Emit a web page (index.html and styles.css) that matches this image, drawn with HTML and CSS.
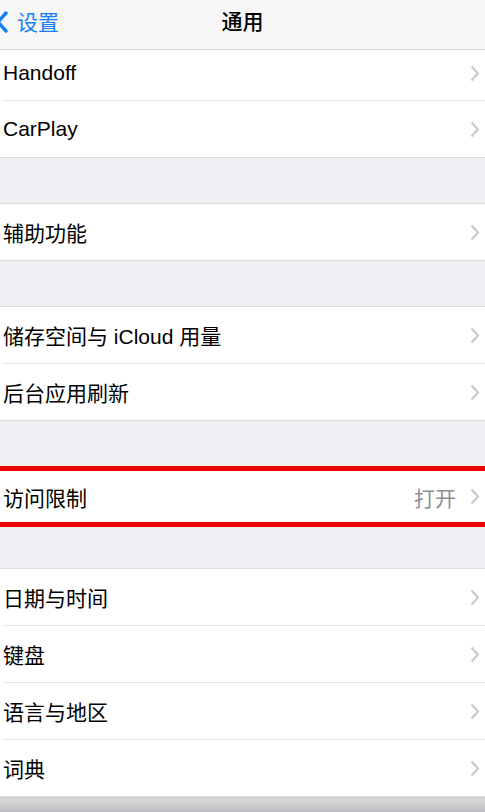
FILE: index.html
```html
<!DOCTYPE html>
<html lang="zh-CN">
<head>
    <meta charset="UTF-8">
    <meta name="viewport" content="width=device-width, initial-scale=1.0">
    <title>通用</title>
    <link rel="stylesheet" href="styles.css">
</head>
<body>
    <div class="nav">
        <div class="back">
            <svg class="back-icon" width="12" height="22" viewBox="0 0 12 22">
                <path d="M10 2 L2 11 L10 20" fill="none" stroke="#157efb" stroke-width="3.4" stroke-linecap="round" stroke-linejoin="round"/>
            </svg>
            <span>设置</span>
        </div>
        <div class="nav-title">通用</div>
    </div>

    <div class="group first">
        <div class="row short"><div class="row-inner"><span class="label">Handoff</span><svg class="chev" width="10" height="17" viewBox="0 0 10 17"><path d="M1.5 1.5 L8 8.5 L1.5 15.5" fill="none" stroke="#c7c7cc" stroke-width="2"/></svg></div></div>
        <div class="row"><div class="row-inner last"><span class="label">CarPlay</span><svg class="chev" width="10" height="17" viewBox="0 0 10 17"><path d="M1.5 1.5 L8 8.5 L1.5 15.5" fill="none" stroke="#c7c7cc" stroke-width="2"/></svg></div></div>
    </div>

    <div class="group">
        <div class="row"><div class="row-inner last"><span class="label">辅助功能</span><svg class="chev" width="10" height="17" viewBox="0 0 10 17"><path d="M1.5 1.5 L8 8.5 L1.5 15.5" fill="none" stroke="#c7c7cc" stroke-width="2"/></svg></div></div>
    </div>

    <div class="group">
        <div class="row"><div class="row-inner"><span class="label">储存空间与 iCloud 用量</span><svg class="chev" width="10" height="17" viewBox="0 0 10 17"><path d="M1.5 1.5 L8 8.5 L1.5 15.5" fill="none" stroke="#c7c7cc" stroke-width="2"/></svg></div></div>
        <div class="row"><div class="row-inner last"><span class="label">后台应用刷新</span><svg class="chev" width="10" height="17" viewBox="0 0 10 17"><path d="M1.5 1.5 L8 8.5 L1.5 15.5" fill="none" stroke="#c7c7cc" stroke-width="2"/></svg></div></div>
    </div>

    <div class="group marked">
        <div class="row"><div class="row-inner last"><span class="label">访问限制</span><span class="value">打开</span><svg class="chev" width="10" height="17" viewBox="0 0 10 17"><path d="M1.5 1.5 L8 8.5 L1.5 15.5" fill="none" stroke="#c7c7cc" stroke-width="2"/></svg></div></div>
    </div>

    <div class="group">
        <div class="row"><div class="row-inner"><span class="label">日期与时间</span><svg class="chev" width="10" height="17" viewBox="0 0 10 17"><path d="M1.5 1.5 L8 8.5 L1.5 15.5" fill="none" stroke="#c7c7cc" stroke-width="2"/></svg></div></div>
        <div class="row"><div class="row-inner"><span class="label">键盘</span><svg class="chev" width="10" height="17" viewBox="0 0 10 17"><path d="M1.5 1.5 L8 8.5 L1.5 15.5" fill="none" stroke="#c7c7cc" stroke-width="2"/></svg></div></div>
        <div class="row"><div class="row-inner"><span class="label">语言与地区</span><svg class="chev" width="10" height="17" viewBox="0 0 10 17"><path d="M1.5 1.5 L8 8.5 L1.5 15.5" fill="none" stroke="#c7c7cc" stroke-width="2"/></svg></div></div>
        <div class="row"><div class="row-inner last"><span class="label">词典</span><svg class="chev" width="10" height="17" viewBox="0 0 10 17"><path d="M1.5 1.5 L8 8.5 L1.5 15.5" fill="none" stroke="#c7c7cc" stroke-width="2"/></svg></div></div>
    </div>

    <div class="bottom-bar"></div>
</body>
</html>
```

FILE: styles.css
```css
html, body {
    margin: 0;
    padding: 0;
}
body {
    width: 485px;
    height: 812px;
    overflow: hidden;
    background-color: #efeff4;
    font-family: "Liberation Sans", "Noto Sans CJK SC", sans-serif;
    font-size: 21px;
    color: #000;
    display: flex;
    flex-direction: column;
}
.nav {
    height: 49px;
    flex-shrink: 0;
    background-color: #f7f7f7;
    border-bottom: 1px solid #d6d6d9;
    display: flex;
    align-items: center;
    justify-content: center;
    position: relative;
}
.back {
    position: absolute;
    left: -4px;
    top: 0;
    height: 42px;
    display: flex;
    align-items: center;
    gap: 9px;
    color: #157efb;
    font-family: "Noto Sans CJK SC", sans-serif;
}
.back-icon {
    margin-top: 1px;
}
.nav-title {
    font-family: "Noto Sans CJK SC", sans-serif;
    font-weight: 500;
    margin-top: -9px;
}
.group {
    background-color: #fff;
    border-top: 1px solid #dcdce0;
    border-bottom: 1px solid #dcdce0;
    margin-top: 45px;
    flex-shrink: 0;
}
.group.first {
    margin-top: 0;
    border-top: none;
}
.group.marked {
    border-top: 5px solid #ee0000;
    border-bottom: 5px solid #ee0000;
    margin-top: 45px;
}
.group.marked + .group {
    margin-top: 41px;
}
.row {
    padding-left: 3px;
    display: flex;
}
.row-inner {
    flex: 1;
    height: 56px;
    display: flex;
    align-items: center;
    padding-right: 5px;
    border-bottom: 1px solid #e3e3e6;
}
.row-inner.last {
    height: 56px;
    border-bottom: none;
}
.row.short .row-inner {
    height: 50px;
    align-items: flex-start;
}
.row.short .label {
    margin-top: 11px;
}
.group.marked .row-inner {
    height: 51px;
}
.label {
    flex: 1;
    font-family: "Liberation Sans", "Noto Sans CJK SC", sans-serif;
}
.value {
    color: #8e8e93;
    margin-right: 14px;
    font-family: "Noto Sans CJK SC", sans-serif;
}
.chev {
    flex-shrink: 0;
}
.row.short .chev {
    margin-top: 15px;
}
.bottom-bar {
    flex: 1;
    background: linear-gradient(#dadadc, #bdbdc1);
    border-top: 1px solid #cfcfd2;
}
```
